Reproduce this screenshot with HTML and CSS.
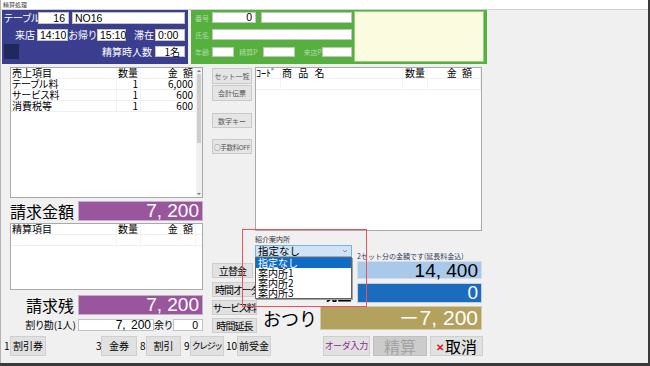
FILE: index.html
```html
<!DOCTYPE html>
<html lang="ja">
<head>
    <meta charset="UTF-8">
    <meta name="viewport" content="width=device-width, initial-scale=1.0">
    <title>精算処理</title>
    <link rel="stylesheet" href="styles.css">
</head>
<body>

<div class="window">
    <div class="titlebar">精算処理</div>

    <!-- Guest / member info -->
    <div class="top">
        <div class="guest">
            <div class="g-row row-table">
                <span class="g-label lbl-table">テーブル</span>
                <span class="field num table-no">16</span>
                <span class="field table-name">NO16</span>
            </div>
            <div class="g-row row-time">
                <span class="g-label lbl-in">来店</span>
                <span class="field time-in">14:10</span>
                <span class="g-label lbl-out">お帰り</span>
                <span class="field time-out">15:10</span>
                <span class="g-label lbl-stay">滞在</span>
                <span class="field time-stay">0:00</span>
            </div>
            <div class="g-row row-people">
                <span class="color-box"></span>
                <span class="g-label lbl-people">精算時人数</span>
                <span class="field num people">1名</span>
            </div>
        </div>

        <div class="member">
            <div class="m-form">
                <div class="m-row row-no">
                    <span class="m-label lbl-no">番号</span>
                    <span class="field num m-no">0</span>
                    <span class="field m-extra"></span>
                </div>
                <div class="m-row row-name">
                    <span class="m-label lbl-no">氏名</span>
                    <span class="field m-name"></span>
                </div>
                <div class="m-row row-age">
                    <span class="m-label lbl-no">年齢</span>
                    <span class="field m-age"></span>
                    <span class="m-label lbl-pay-p">精算P</span>
                    <span class="field m-pay-p"></span>
                    <span class="m-label lbl-visit-p">来店P</span>
                    <span class="field m-visit-p"></span>
                </div>
            </div>
            <div class="memo"></div>
        </div>
    </div>

    <div class="main">
        <!-- Left: sales / settlement -->
        <div class="left">
            <div class="list sales-list">
                <div class="list-body">
                    <div class="row head"><span>売上項目</span><span class="r">数量</span><span class="r money">金 額</span></div>
                    <div class="row"><span>テーブル料</span><span class="r">1</span><span class="r">6,000</span></div>
                    <div class="row"><span>サービス料</span><span class="r">1</span><span class="r">600</span></div>
                    <div class="row"><span>消費税等</span><span class="r">1</span><span class="r">600</span></div>
                </div>
                <div class="scrollbar">
                    <span class="arrow"><span class="tri-up"></span></span>
                    <span class="thumb"></span>
                    <span class="track"></span>
                    <span class="arrow"><span class="tri-down"></span></span>
                </div>
            </div>

            <div class="total-row">
                <span class="big-label">請求金額</span>
                <span class="amount purple">7, 200</span>
            </div>

            <div class="list settle-list">
                <div class="list-body">
                    <div class="row head"><span>精算項目</span><span class="r">数量</span><span class="r money">金 額</span></div>
                    <div class="row"><span></span><span></span><span></span></div>
                </div>
            </div>

            <div class="total-row remain">
                <span class="big-label">請求残</span>
                <span class="amount purple">7, 200</span>
            </div>

            <div class="split-row">
                <span class="split-label">割り勘(1人)</span>
                <span class="field num split-amount">7, 200</span>
                <span class="split-label rest-label">余り</span>
                <span class="field num split-rest">0</span>
            </div>
        </div>

        <!-- Center: order list and payment -->
        <div class="center">
            <div class="center-top">
                <div class="tool-buttons">
                    <button class="tool t-set">セット一覧</button>
                    <button class="tool t-slip">会計伝票</button>
                    <button class="tool t-keys">数字キー</button>
                    <button class="tool t-fee">○手数料OFF</button>
                </div>
                <div class="list order-list">
                    <div class="row head"><span>ｺｰﾄﾞ</span><span class="name">商 品 名</span><span class="c">数量</span><span class="r money">金 額</span></div>
                    <div class="row"><span></span><span></span><span></span><span></span></div>
                </div>
            </div>

            <div class="center-bottom">
                <div class="side-buttons">
                    <button class="side s-first">立替金</button>
                    <button class="side s-order">時間オーダ</button>
                    <button class="side">サービス料</button>
                    <button class="side">時間延長</button>
                </div>
                <div class="pay">
                    <div class="note">2セット分の金額です(延長料金込)</div>
                    <div class="pay-row row-sky">
                        <span class="amount sky">14, 400</span>
                    </div>
                    <div class="pay-row row-navy">
                        <span class="pay-label">現金</span>
                        <span class="amount navy">0</span>
                    </div>
                    <div class="pay-row row-gold">
                        <span class="pay-label change">おつり</span>
                        <span class="amount gold">－7, 200</span>
                    </div>
                </div>
            </div>

            <!-- Introducer dropdown (open) -->
            <div class="popup">
                <div class="pop-label">紹介案内所</div>
                <div class="combo">
                    <span>指定なし</span>
                    <svg class="chev" width="6" height="4" viewBox="0 0 6 4"><path d="M1 1 L3 3 L5 1" fill="none" stroke="#7a7a7a" stroke-width="0.8"/></svg>
                </div>
                <div class="dropdown">
                    <div class="opt selected">指定なし</div>
                    <div class="opt">案内所1</div>
                    <div class="opt">案内所2</div>
                    <div class="opt">案内所3</div>
                </div>
            </div>
        </div>
    </div>

    <!-- Bottom buttons -->
    <div class="footer">
        <span class="key k1">1</span><button class="btn b-coupon">割引券</button>
        <span class="key k3">3</span><button class="btn b-ticket">金券</button>
        <span class="key k8">8</span><button class="btn b-discount">割引</button>
        <span class="key k9">9</span><button class="btn b-credit">クレジット</button>
        <span class="key k10">10</span><button class="btn b-advance">前受金</button>
        <button class="btn b-order">オーダ入力</button>
        <button class="btn b-settle" disabled>精算</button>
        <button class="btn b-cancel"><span class="x">✕</span>取消</button>
    </div>
</div>

</body>
</html>
```

FILE: styles.css
```css
* {
    box-sizing: border-box;
}
body {
    margin: 0;
    background-color: #3a3a3a;
    font-family: "Noto Sans CJK JP", sans-serif;
    color: #000;
}
button {
    font-family: inherit;
    padding: 0;
    cursor: pointer;
    white-space: nowrap;
}
.window {
    width: 648px;
    height: 363px;
    background-color: #f0f0f0;
    border-left: 1px solid #b4b4b4;
    position: relative;
    overflow: hidden;
}
.titlebar {
    height: 10px;
    background-color: #fff;
    border-bottom: 1px solid #d2d2d2;
    font-size: 6px;
    line-height: 9px;
    padding-left: 2px;
    color: #444;
}

/* top panels */
.top {
    display: flex;
    gap: 3px;
    height: 54px;
    padding-left: 1px;
}
.guest {
    width: 186px;
    background-color: #3b3e8f;
    padding: 2px 3px 0 2px;
    display: flex;
    flex-direction: column;
}
.g-row {
    display: flex;
    align-items: center;
}
.row-table { height: 12px; }
.row-time { height: 12px; margin-top: 5px; }
.row-people { height: 15px; margin-top: 3px; }
.g-label {
    color: #fff;
    font-size: 10px;
    line-height: 12px;
    font-feature-settings: "palt";
    white-space: nowrap;
}
.field {
    display: block;
    height: 12px;
    background-color: #fff;
    border: 1px solid #c3c3c3;
    font-family: "Liberation Sans", "Noto Sans CJK JP", sans-serif;
    font-size: 10.5px;
    line-height: 10px;
    padding: 0 2px;
    white-space: nowrap;
}
.field.num {
    text-align: right;
}
.lbl-table { width: 34px; }
.table-no { width: 31px; padding-right: 3px; }
.table-name { width: 113px; margin-left: 3px; }
.lbl-in { width: 33px; text-align: right; padding-right: 2px; }
.time-in { width: 31px; }
.lbl-out { width: 29px; text-align: center; }
.time-out { width: 29px; }
.lbl-stay { width: 29px; text-align: right; padding-right: 1px; }
.time-stay { width: 30px; }
.color-box {
    width: 15px;
    height: 15px;
    background-color: #1e2a5c;
    margin-right: auto;
}
.lbl-people { margin-right: 3px; }
.people {
    width: 30px;
    height: 11px;
    font-family: "Noto Sans CJK JP", sans-serif;
    font-size: 10px;
    line-height: 9px;
    padding-right: 4px;
}

.member {
    width: 296px;
    background-color: #55b03e;
    display: flex;
    padding: 0 3px 2px 4px;
}
.m-form {
    width: 157px;
    display: flex;
    flex-direction: column;
}
.m-row {
    display: flex;
    align-items: center;
}
.m-row .field { height: 100%; }
.row-no { height: 11px; margin-top: 2px; }
.row-name { height: 11px; margin-top: 6px; }
.row-age { height: 10px; margin-top: 7px; }
.m-label {
    font-size: 7px;
    line-height: 10px;
    color: rgba(255, 255, 255, 0.55);
    white-space: nowrap;
}
.lbl-no { width: 17px; }
.m-no { width: 44px; padding-right: 3px; line-height: 9px; }
.m-extra { width: 91px; margin-left: 5px; }
.m-name { width: 140px; }
.m-age { width: 22px; }
.lbl-pay-p { width: 29px; text-align: center; }
.m-pay-p { width: 32px; }
.lbl-visit-p { width: 27px; text-align: right; }
.m-visit-p { width: 30px; }
.memo {
    width: 130px;
    height: 51px;
    margin: 1px 0 0 2px;
    background-color: #fbfbe0;
    border: 1px solid #97cd86;
}

/* main area */
.main {
    display: flex;
    margin-top: 3px;
    height: 267px;
}
.left {
    width: 195px;
    margin-left: 7px;
    display: flex;
    flex-direction: column;
}
.list {
    background-color: #fff;
    border: 1px solid #a9a9a9;
}
.left .list {
    margin-left: 2px;
    width: 193px;
}
.sales-list {
    height: 131px;
    display: flex;
}
.settle-list {
    height: 67px;
    margin-top: 2px;
}
.list-body {
    flex: 1;
}
.row {
    display: grid;
    grid-template-columns: 106px 24px 55px;
    height: 11px;
    border-bottom: 1px solid #f0f0f0;
    font-size: 10px;
    line-height: 10px;
    font-feature-settings: "palt";
}
.row span {
    border-right: 1px solid #f3f3f3;
    padding-left: 1px;
    white-space: nowrap;
}
.row .r {
    text-align: right;
    padding-right: 2px;
}
.row .c {
    text-align: center;
}
.row .money {
    word-spacing: 3px;
}
.scrollbar {
    width: 6px;
    display: flex;
    flex-direction: column;
    background-color: #f0f0f0;
}
.arrow {
    height: 6px;
    display: flex;
    align-items: center;
    justify-content: center;
}
.tri-up, .tri-down {
    width: 0;
    height: 0;
    border-left: 2px solid transparent;
    border-right: 2px solid transparent;
}
.tri-up { border-bottom: 2px solid #777; }
.tri-down { border-top: 2px solid #777; }
.thumb {
    height: 69px;
    margin: 0 1px;
    background-color: #cdcdcd;
}
.track {
    flex: 1;
}

.total-row {
    display: flex;
    height: 20px;
    margin-top: 3px;
}
.total-row.remain {
    margin-top: 5px;
}
.big-label {
    width: 70px;
    font-size: 16px;
    line-height: 20px;
    text-align: right;
    padding-right: 4px;
    white-space: nowrap;
}
.amount {
    display: block;
    font-family: "Liberation Sans", "Noto Sans CJK JP", sans-serif;
    color: #fff;
    text-align: right;
    padding-right: 3px;
    white-space: nowrap;
}
.purple {
    width: 125px;
    height: 20px;
    background-color: #9a569c;
    border: 1px solid #c4b0c6;
    font-size: 19px;
    line-height: 18px;
}
.split-row {
    display: flex;
    align-items: center;
    height: 13px;
    margin-top: 3px;
}
.split-label {
    width: 70px;
    font-size: 10px;
    line-height: 13px;
    text-align: right;
    padding-right: 2px;
    font-feature-settings: "palt";
    white-space: nowrap;
}
.split-amount {
    width: 76px;
    height: 12px;
    font-size: 12px;
    word-spacing: 2px;
}
.rest-label {
    width: 19px;
    padding-right: 1px;
}
.split-rest {
    width: 30px;
    height: 12px;
    padding-right: 4px;
}

/* center */
.center {
    width: 270px;
    margin-left: 9px;
    position: relative;
    display: flex;
    flex-direction: column;
}
.center-top {
    display: flex;
    height: 164px;
}
.tool-buttons {
    width: 40px;
    display: flex;
    flex-direction: column;
}
.tool {
    height: 16px;
    margin-top: 1px;
    background-color: #e5e5e5;
    border: 1px solid #c9c9c9;
    font-size: 7px;
    color: #555;
    overflow: hidden;
}
.t-keys { height: 15px; margin-top: 12px; }
.t-fee { height: 15px; margin-top: 11px; font-size: 6.5px; letter-spacing: -0.3px; }
.order-list {
    width: 227px;
    height: 164px;
    margin-left: 3px;
}
.order-list .row {
    grid-template-columns: 25px 122px 25px 53px;
}
.order-list .row span {
    padding-left: 0;
}
.order-list .row .name {
    padding-left: 1px;
    word-spacing: 4px;
}
.order-list .row .r {
    padding-right: 8px;
}

.center-bottom {
    display: flex;
    height: 103px;
}
.side-buttons {
    width: 45px;
    display: flex;
    flex-direction: column;
}
.side {
    height: 15px;
    margin-top: 3px;
    background-color: #e1e1e1;
    border: 1px solid #cdcdcd;
    font-size: 10px;
    line-height: 13px;
    letter-spacing: -0.9px;
    font-feature-settings: "palt";
}
.s-first { margin-top: 32px; width: 41px; }
.s-order { margin-top: 4px; text-align: left; padding-left: 2px; }
.pay {
    width: 225px;
    padding-top: 21px;
    display: flex;
    flex-direction: column;
    align-items: flex-end;
}
.note {
    width: 125px;
    height: 8px;
    font-size: 7px;
    line-height: 8px;
    color: #2f3b5e;
    white-space: nowrap;
}
.pay-row {
    display: flex;
    align-items: center;
    justify-content: flex-end;
}
.row-sky { margin-top: 1px; }
.row-navy { margin-top: 4px; }
.row-gold { margin-top: 3px; }
.pay-label {
    font-size: 15px;
    font-weight: bold;
    line-height: 1;
    margin-right: 5px;
}
.pay-label.change {
    font-size: 18px;
    font-weight: normal;
    margin-right: 3px;
}
.sky {
    width: 125px;
    height: 18px;
    background-color: #a9c9ea;
    border: 1px solid #d4dde8;
    color: #000;
    font-size: 19px;
    line-height: 17px;
}
.navy {
    width: 125px;
    height: 20px;
    background-color: #1b6cbc;
    border: 1px solid #c6cfd9;
    font-size: 19px;
    line-height: 18px;
}
.gold {
    width: 162px;
    height: 24px;
    background-color: #b3a15e;
    border: 1px solid #d2cbb0;
    font-size: 21px;
    line-height: 22px;
}

/* dropdown overlay */
.popup {
    position: absolute;
    left: 30px;
    top: 162px;
    width: 125px;
    height: 78px;
    border: 1px solid #e8545e;
    padding: 5px 0 0 12px;
    z-index: 2;
}
.pop-label {
    height: 8px;
    font-size: 7px;
    line-height: 8px;
    color: #333;
}
.combo {
    width: 97px;
    height: 12px;
    margin-top: 2px;
    background-color: #cfe3f6;
    border: 1px solid #7db0e2;
    display: flex;
    align-items: center;
    justify-content: space-between;
    padding: 0 3px 0 2px;
    font-size: 10.5px;
    line-height: 10px;
}
.dropdown {
    width: 97px;
    height: 42px;
    background-color: #fff;
    border: 1px solid #646464;
    box-shadow: 1px 1px 0 #a0a0a0;
}
.opt {
    height: 10px;
    font-size: 10px;
    line-height: 10px;
    padding-left: 2px;
    white-space: nowrap;
}
.opt.selected {
    background-color: #0f6cc6;
    color: #fff;
}

/* footer */
.footer {
    display: flex;
    height: 20px;
    margin-top: 2px;
    padding-left: 3px;
}
.key {
    font-size: 10px;
    line-height: 20px;
    white-space: nowrap;
}
.btn {
    background-color: #e1e1e1;
    border: 1px solid #cfcfcf;
    font-size: 10px;
    line-height: 18px;
    color: #000;
}
.k1 { width: 6px; }
.b-coupon { width: 36px; }
.k3 { width: 5px; margin-left: 50px; }
.b-ticket { width: 36px; }
.k8 { width: 6px; margin-left: 3px; }
.b-discount { width: 35px; }
.k9 { width: 6px; margin-left: 3px; }
.b-credit {
    width: 34px;
    font-size: 9px;
    text-align: left;
    padding-left: 1px;
    letter-spacing: -0.6px;
    font-feature-settings: "palt";
    overflow: hidden;
}
.k10 { width: 11px; margin-left: 2px; }
.b-advance { width: 34px; }
.b-order {
    width: 47px;
    margin-left: 52px;
    font-size: 9px;
    color: #8a2b8f;
    font-feature-settings: "palt";
}
.b-settle {
    width: 54px;
    margin-left: 3px;
    background-color: #cccccc;
    border-color: #bfbfbf;
    color: #a3a3a3;
    font-size: 16px;
}
.b-cancel {
    width: 53px;
    margin-left: 3px;
    font-size: 16px;
}
.b-cancel .x {
    color: #d42020;
    font-size: 10px;
    font-weight: bold;
    margin-right: 1px;
    vertical-align: 2px;
}
```
